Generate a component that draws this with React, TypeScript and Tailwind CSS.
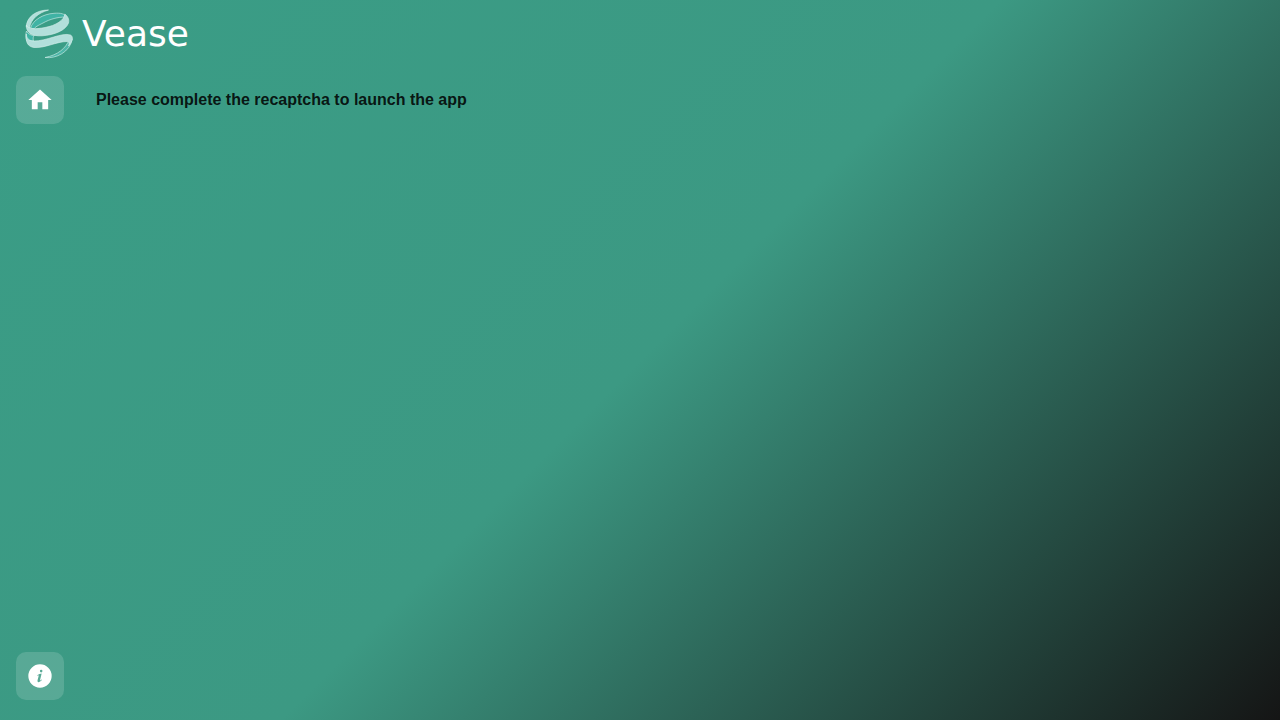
import { MdHome } from "react-icons/md";

function Logo() {
  return (
    <svg viewBox="0 0 50 52" className="h-[52px] w-[50px]" aria-hidden="true">
      <g stroke="#d8f0ec" strokeWidth="0.6" strokeLinejoin="round">
        <path d="M6.500 20C9 12 19 6 30 5.300C37 4.700 41.500 6 41.500 9C34 9 26 11 19 15C14 17.500 11 19 10 21Z" fill="#3fb3a4" />
        <path d="M2.500 23C4 26 7 27.500 10.500 27.500C9 28.500 8.800 30.500 9.500 33L3 33C1.500 30 1.500 26 2.500 23Z" fill="#3fb3a4" />
        <path d="M45 32C42 40 34 47 21 49.500C32 51 46 44 48.300 31Z" fill="#4db6a8" />
        <path d="M24.500 2C12 2 2.500 9 2.300 19L5.500 20C7 11 14 5 24.500 2Z" fill="#b2dfdb" />
        <path d="M2.300 17C2 24 7 28.500 18 27.800C31 27 42 22 44.500 15C45.500 11 43.500 8 40.800 6C40.500 12 32 17.500 21 19.500C11 21.500 3.500 21 2.300 17Z" fill="#b2dfdb" />
        <path d="M2.300 26C1.500 34 3.500 38.500 10 39.500C20 40.500 33 33.500 43 33.500C45.500 33.500 45.500 36 44.500 38C49 33 49.500 28.500 46.500 27C38 24 22 33.500 9.500 33C4.500 32.700 2.500 30 2.300 26Z" fill="#b2dfdb" />
      </g>
    </svg>
  );
}

function InfoIcon() {
  return (
    <svg viewBox="0 0 24 24" className="size-7" fill="currentColor" aria-hidden="true">
      <path
        fillRule="evenodd"
        d="M12 2a10 10 0 1 0 0 20a10 10 0 0 0 0-20ZM13 6.700a1.100 1.100 0 1 1 0 2.200a1.100 1.100 0 0 1 0-2.200ZM9.600 11.300Q11.600 10 13.400 9.900L12 15.600Q11.800 16.500 13.400 15.100L13.700 15.500Q11.800 17.500 10.600 17.300Q9.500 17.100 9.900 15.600L10.900 11.700Q11.100 11.200 9.800 11.700Z"
      />
    </svg>
  );
}

export default function App() {
  return (
    <div className="flex min-h-screen flex-col bg-linear-[135deg,#3a9d86_0%,#3c9983_50%,#151515_100%] font-['Liberation_Sans',Arial,sans-serif]">
      <header className="flex h-[68px] items-center px-6">
        <a href="#" aria-label="Vease" className="flex items-center gap-2 text-white">
          <Logo />
          <span className="font-['DejaVu_Sans',sans-serif] text-4xl">Vease</span>
        </a>
      </header>
      <div className="flex grow">
        <nav className="flex w-20 flex-col items-center justify-between pt-2 pb-5">
          <button type="button" aria-label="Home" className="flex size-12 items-center justify-center rounded-[10px] bg-white/15 text-white">
            <MdHome className="size-7" />
          </button>
          <button type="button" aria-label="Information" className="flex size-12 items-center justify-center rounded-[10px] bg-white/15 text-white">
            <InfoIcon />
          </button>
        </nav>
        <main className="grow p-4">
          <h1 className="text-base leading-8 font-bold text-black/87">Please complete the recaptcha to launch the app</h1>
        </main>
      </div>
    </div>
  );
}
